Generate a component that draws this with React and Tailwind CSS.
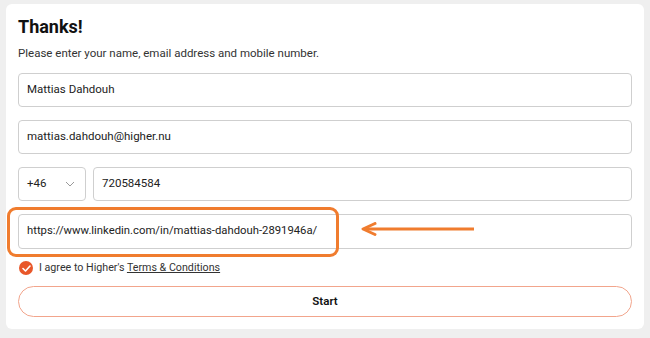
import React from "react";

export default function App() {
  const font = { fontFamily: 'Roboto, "Noto Sans", sans-serif' };
  return (
    <div className="w-[650px] h-[338px] bg-[#efefef] pt-[4px] pl-[6px]" style={font}>
      <div className="relative w-[638px] h-[325px] bg-white rounded-[6px] px-[12px] pt-[11px]">
        <h1 className="text-[18px] leading-[24px] font-bold text-[#111]">Thanks!</h1>
        <p className="mt-[6px] text-[11.5px] leading-[16px] text-[#333]">
          Please enter your name, email address and mobile number.
        </p>
        <div className="mt-[12px] flex flex-col gap-[13px]">
          <div className="h-[34px] border border-[#cfcfcf] rounded-[4px] flex items-center px-[8px] text-[11.5px] text-[#222]">
            Mattias Dahdouh
          </div>
          <div className="h-[34px] border border-[#cfcfcf] rounded-[4px] flex items-center px-[8px] text-[11.5px] text-[#222]">
            mattias.dahdouh@higher.nu
          </div>
          <div className="flex gap-[7px]">
            <div className="w-[68px] h-[34px] border border-[#cfcfcf] rounded-[4px] flex items-center justify-between px-[8px] text-[11.5px] text-[#222]">
              <span>+46</span>
              <svg width="10" height="6" viewBox="0 0 10 6" className="mr-[2px]">
                <path d="M1 1 L5 5 L9 1" fill="none" stroke="#999" strokeWidth="1" />
              </svg>
            </div>
            <div className="flex-1 h-[34px] border border-[#cfcfcf] rounded-[4px] flex items-center px-[8px] text-[11.5px] text-[#222]">
              720584584
            </div>
          </div>
          <div className="h-[35px] border border-[#cfcfcf] rounded-[4px] flex items-center px-[8px] text-[11.3px] text-[#222]">
            https://www.linkedin.com/in/mattias-dahdouh-2891946a/
          </div>
        </div>
        <div className="mt-[11px] flex items-center gap-[6px] text-[10.7px] text-[#333] pl-[1px]">
          <span className="w-[14px] h-[14px] rounded-full bg-[#e8572a] flex items-center justify-center">
            <svg width="9" height="7" viewBox="0 0 9 7">
              <path d="M1 3.5 L3.5 6 L8 1" fill="none" stroke="white" strokeWidth="1.6" strokeLinecap="round" strokeLinejoin="round" />
            </svg>
          </span>
          <span>
            I agree to Higher's <span className="underline">Terms &amp; Conditions</span>
          </span>
        </div>
        <button className="mt-[10px] w-full h-[31px] rounded-full border border-[#f2a58c] bg-white text-[11.5px] font-semibold text-[#111]">
          Start
        </button>
        <div className="absolute left-[1px] top-[203px] w-[332px] h-[50px] border-[3px] border-[#f07c2e] rounded-[9px]" />
        <svg className="absolute left-[354px] top-[218px]" width="122" height="14" viewBox="0 0 122 14">
          <path d="M114 7 H4" stroke="#f07c2e" strokeWidth="3" fill="none" />
          <path d="M15 1.5 L3 7 L15 12.5" stroke="#f07c2e" strokeWidth="3" fill="none" strokeLinecap="round" strokeLinejoin="round" />
        </svg>
      </div>
    </div>
  );
}
